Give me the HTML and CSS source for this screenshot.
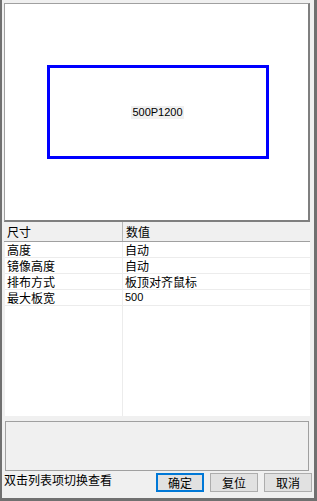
FILE: index.html
```html
<!DOCTYPE html>
<html lang="zh-CN">
<head>
    <meta charset="UTF-8">
    <title>排版设置</title>
    <link rel="stylesheet" href="styles.css">
</head>
<body>
    <div class="window">
        <div class="preview">
            <div class="board">
                <span class="board-label">500P1200</span>
            </div>
        </div>

        <div class="prop-list">
            <div class="prop-head">
                <div class="cell">尺寸</div>
                <div class="cell">数值</div>
            </div>
            <div class="prop-body">
                <div class="prop-row">
                    <div class="cell">高度</div>
                    <div class="cell">自动</div>
                </div>
                <div class="prop-row">
                    <div class="cell">镜像高度</div>
                    <div class="cell">自动</div>
                </div>
                <div class="prop-row">
                    <div class="cell">排布方式</div>
                    <div class="cell">板顶对齐鼠标</div>
                </div>
                <div class="prop-row">
                    <div class="cell">最大板宽</div>
                    <div class="cell num">500</div>
                </div>
            </div>
        </div>

        <div class="memo"></div>

        <div class="footer">
            <span class="hint">双击列表项切换查看</span>
            <div class="buttons">
                <button class="btn btn-default">确定</button>
                <button class="btn">复位</button>
                <button class="btn">取消</button>
            </div>
        </div>
    </div>
</body>
</html>
```

FILE: styles.css
```css
body {
    margin: 0;
    font-family: "Noto Sans CJK SC", "DejaVu Sans", sans-serif;
    font-size: 12px;
    color: #000;
    background-color: #f0f0f0;
}

.window {
    width: 312px;
    height: 498px;
    border-left: 2px solid #707070;
    border-right: 3px solid #707070;
    border-bottom: 3px solid #707070;
    background-color: #f0f0f0;
    display: flex;
    flex-direction: column;
}

/* preview area */
.preview {
    margin: 3px 0 0 2px;
    width: 301px;
    height: 216px;
    padding-left: 2px;
    background-color: #fff;
    border-top: 1px solid #a0a0a0;
    border-left: 1px solid #a0a0a0;
    border-right: 2px solid #7f7f7f;
    border-bottom: 2px solid #7f7f7f;
    display: flex;
    justify-content: center;
    align-items: center;
}

.board {
    width: 216px;
    height: 88px;
    border: 3px solid #0000ff;
    display: flex;
    justify-content: center;
    align-items: center;
}

.board-label {
    font-family: "Liberation Sans", sans-serif;
    font-size: 11px;
    line-height: 13px;
    padding: 0 1px;
    background-color: #f0f0f0;
    color: #000;
}

/* property list */
.prop-list {
    margin-left: 2px;
    width: 306px;
    height: 194px;
    display: flex;
    flex-direction: column;
}

.prop-head {
    display: grid;
    grid-template-columns: 119px 1fr;
    height: 19px;
    border-bottom: 1px solid #a0a0a0;
    background-color: #f0f0f0;
}

.prop-head .cell {
    line-height: 19px;
    padding-left: 3px;
}

.prop-head .cell:first-child {
    border-right: 1px solid #b8b8b8;
}

.prop-body {
    flex: 1;
    margin-left: 1px;
    background: linear-gradient(to right, #fff 117px, #ececec 117px, #ececec 118px, #fff 118px);
}

.prop-row {
    display: grid;
    grid-template-columns: 118px 1fr;
    height: 15px;
    border-bottom: 1px solid #ececec;
}

.prop-row .cell {
    line-height: 15px;
    padding-left: 2px;
    white-space: nowrap;
}

.prop-row .cell:first-child {
    border-right: 1px solid #ececec;
}

.prop-row .num {
    font-family: "Liberation Sans", sans-serif;
    font-size: 11px;
}

/* message box */
.memo {
    margin: 5px 0 0 3px;
    width: 302px;
    height: 48px;
    border: 1px solid #a0a0a0;
    background-color: #f0f0f0;
}

.footer {
    display: flex;
    justify-content: space-between;
    align-items: flex-start;
    padding: 2px 2px 0 2px;
}

.hint {
    line-height: 14px;
}

.buttons {
    display: flex;
    gap: 6px;
}

.btn {
    width: 48px;
    height: 19px;
    padding: 0;
    font-family: "Noto Sans CJK SC", sans-serif;
    font-size: 12px;
    line-height: 15px;
    color: #000;
    background-color: #e1e1e1;
    border: 1px solid #adadad;
}

.btn-default {
    border: 2px solid #0078d7;
}
```
